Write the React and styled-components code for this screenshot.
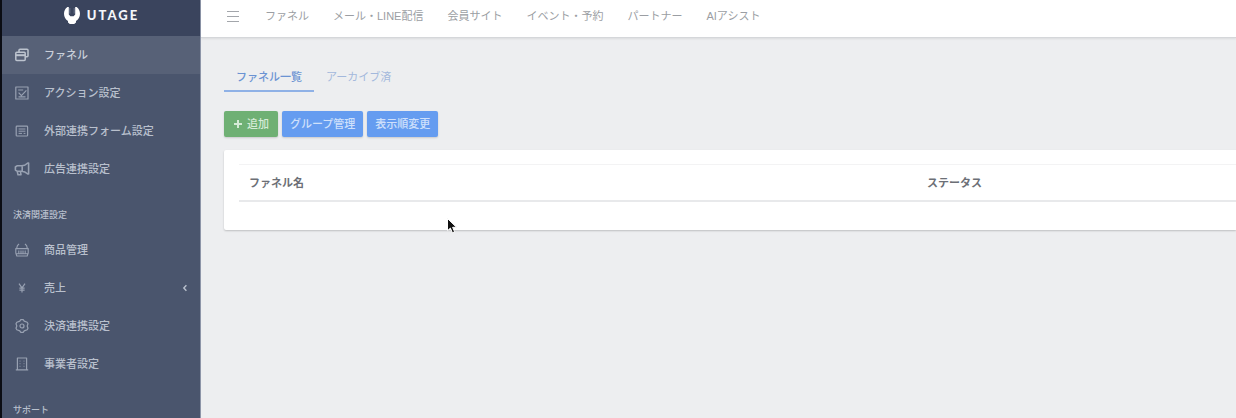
import React from "react";
import styled, { createGlobalStyle } from "styled-components";

const GlobalStyle = createGlobalStyle`
  *, *::before, *::after { box-sizing: border-box; }
  body {
    margin: 0;
    background: #edeef0;
    color: #6c6f76;
    font-family: "Liberation Sans", "Noto Sans CJK JP", sans-serif;
    font-size: 11px;
    line-height: 16px;
  }
  ul { list-style: none; margin: 0; padding: 0; }
  a { color: inherit; text-decoration: none; }
`;

const Layout = styled.div`
  display: flex;
  height: 100vh;
  overflow: hidden;
`;

const Sidebar = styled.aside`
  flex: 0 0 201px;
  border-left: 2px solid #0b0d14;
  border-right: 1px solid #8d95a8;
  background: #4a556d;
  color: #b9c0cd;
  overflow: hidden;
`;

const Brand = styled.a`
  display: flex;
  align-items: center;
  justify-content: center;
  gap: 6px;
  height: 36px;
  padding-bottom: 6px;
  background: #3a445d;
  color: #f4f6fa;
  font-family: Lato, sans-serif;
  font-size: 13px;
  font-weight: 900;
  letter-spacing: 2px;
`;

const SideLink = styled.a`
  display: flex;
  align-items: center;
  gap: 14px;
  height: 38px;
  padding: 0 12px;
  font-weight: 500;
  background: ${(p) => (p.$active ? "#576177" : "transparent")};
  color: ${(p) => (p.$active ? "#c9cfd9" : "inherit")};

  > span { flex: 1; }
  > svg:first-child { flex: none; color: ${(p) => (p.$active ? "#bcc3ce" : "#98a1b2")}; }
`;

const SideHeading = styled.h2`
  margin: 0;
  padding: 21px 11px 9px;
  font-size: 9px;
  line-height: 13px;
  font-weight: 500;
`;

const Main = styled.div`
  flex: 1;
  min-width: 0;
`;

const TopBar = styled.header`
  display: flex;
  align-items: center;
  gap: 26px;
  height: 38px;
  padding: 0 26px 6px;
  background: #fff;
  border-bottom: 1px solid #d5d7da;
  box-shadow: 0 1px 2px rgba(0, 0, 0, 0.08);
  color: #9b9ea3;
`;

const MenuButton = styled.button`
  display: flex;
  padding: 0;
  border: 0;
  background: none;
  color: #a3a6ab;
`;

const TopNav = styled.nav`
  display: flex;
  gap: 24px;
  white-space: nowrap;
`;

const Content = styled.main`
  padding: 25px 0 24px 23px;
`;

const Tabs = styled.nav`
  display: flex;
`;

const Tab = styled.a`
  padding: 6px 12px 5px;
  border-bottom: 2px solid ${(p) => (p.$active ? "#8fb1e6" : "transparent")};
  color: ${(p) => (p.$active ? "#6b93d3" : "#a3b8dc")};
  font-weight: ${(p) => (p.$active ? 500 : 400)};
`;

const Toolbar = styled.div`
  display: flex;
  gap: 4px;
  margin: 19px 0 13px;
`;

const Button = styled.button`
  display: flex;
  align-items: center;
  gap: 4px;
  height: 26px;
  padding: 0 ${(p) => (p.$green ? "9px" : "8px")};
  border: 0;
  border-radius: 2px;
  background: ${(p) => (p.$green ? "#6fb074" : "#659cf0")};
  color: ${(p) => (p.$green ? "#d6ebd7" : "#cfe0fb")};
  box-shadow: 0 1px 2px rgba(0, 0, 0, 0.15);
  font: inherit;
  font-weight: 500;
`;

const Card = styled.section`
  padding: 14px 0 28px 15px;
  background: #fff;
  border-radius: 2px 0 0 2px;
  box-shadow: 0 1px 2px rgba(0, 0, 0, 0.2);
`;

const Table = styled.table`
  width: 100%;
  border-collapse: collapse;
  table-layout: fixed;
`;

const HeadCell = styled.th`
  width: ${(p) => p.$width};
  padding: 10px 10px 9px;
  border-top: 1px solid #f3f3f4;
  border-bottom: 2px solid #e8e9eb;
  text-align: left;
  font-weight: 700;
`;

const Pointer = styled.svg`
  position: absolute;
  left: 446px;
  top: 217px;
  pointer-events: none;
`;

const Icon = ({ children }) => (
  <svg width="16" height="16" viewBox="0 0 16 16" fill="none" stroke="currentColor" strokeWidth="1.2" strokeLinejoin="round" aria-hidden="true">
    {children}
  </svg>
);

const icons = {
  windows: (
    <Icon>
      <path d="M5 5V3.200a1 1 0 0 1 1-1h7a1 1 0 0 1 1 1v5.600a1 1 0 0 1-1 1h-2" strokeWidth="1.5" />
      <rect x="1.800" y="5.200" width="9.400" height="8.200" rx="1" strokeWidth="1.500" />
      <path d="M1.800 8.200h9.400" strokeWidth="2" />
    </Icon>
  ),
  check: (
    <Icon>
      <rect x="1.800" y="2" width="12.200" height="12" />
      <path d="M4.200 5h5M4.600 7.600l2.800 3 5-5.200M4.500 11.800h7" />
    </Icon>
  ),
  form: (
    <Icon>
      <rect x="2.200" y="3.200" width="11.400" height="9.800" rx="0.800" />
      <path d="M4.600 6h6.800M4.600 8.200h6.800M4.600 10.400h3.400M9.600 10.400h1.800" strokeWidth="1" />
    </Icon>
  ),
  horn: (
    <Icon>
      <path d="M3 4.800h4.600c2.400 0 4.600-1.200 6.200-2.800h.8v11h-.8c-1.600-1.600-3.800-2.800-6.200-2.800H3L1.400 9V6zM8.200 4.800v5.400M3.200 10.200l.8 3.600h3l-.6-3.600" strokeWidth="1.600" />
    </Icon>
  ),
  basket: (
    <Icon>
      <path d="M1.400 6.600h13.200M1.800 6.600v4.400l1 3h10.400l1-3V6.600M2.600 6.600l.8-3L5 2M13.400 6.600l-.8-3L11 2M4.800 8.600v3.200M7 8.600v3.200M9 8.600v3.200M11.200 8.600v3.200M2.400 11.800h11.200" strokeWidth="1.100" />
    </Icon>
  ),
  yen: (
    <Icon>
      <path d="M5 3.600l3 4.200 3-4.200M8 7.800v4.800M5.400 8.200h5.200M5.400 10.200h5.200" />
    </Icon>
  ),
  gear: (
    <Icon>
      <path d="M6.800 1.600h2.400l1 1.500 3 1.200.8 1.500-.8 2.200.8 2.200-.8 1.500-3 1.200-1 1.500H6.800l-1-1.500-3-1.200-.8-1.500.8-2.200L2 5.800l.8-1.500 3-1.200z" />
      <circle cx="8" cy="8" r="2" />
    </Icon>
  ),
  building: (
    <Icon>
      <path d="M3.400 13.800V2h9.200v11.800M1.800 13.800h12.400" />
      <path d="M6 4.600v6.400M10 4.600v6.400" strokeWidth="0.800" strokeDasharray="1 1.600" />
    </Icon>
  ),
};

const primaryLinks = [
  ["windows", "ファネル"],
  ["check", "アクション設定"],
  ["form", "外部連携フォーム設定"],
  ["horn", "広告連携設定"],
];

const paymentLinks = [
  ["basket", "商品管理"],
  ["yen", "売上"],
  ["gear", "決済連携設定"],
  ["building", "事業者設定"],
];

const topLinks = ["ファネル", "メール・LINE配信", "会員サイト", "イベント・予約", "パートナー", "AIアシスト"];

const SideMenu = ({ links, active, expandable }) => (
  <ul>
    {links.map(([icon, label]) => (
      <li key={label}>
        <SideLink href="#" $active={label === active}>
          {icons[icon]}
          <span>{label}</span>
          {label === expandable && (
            <svg width="6" height="8" viewBox="0 0 6 8" fill="none" stroke="currentColor" strokeWidth="1.4" aria-hidden="true">
              <path d="M4.400 1.200L1.800 4l2.600 2.800" />
            </svg>
          )}
        </SideLink>
      </li>
    ))}
  </ul>
);

export default function App() {
  return (
    <>
      <GlobalStyle />
      <Layout>
        <Sidebar>
          <Brand href="#">
            <svg width="18" height="20" viewBox="0 0 18 20" fill="#fff" aria-hidden="true">
              <path d="M4.400 2C2.200 3.600 1 6 1 8.800c0 3.200 1.600 5.800 4 7.200v1.600l1.800 1.400h4.400l1.800-1.400V16c2.400-1.400 4-4 4-7.200 0-2.800-1.200-5.200-3.400-6.800h-1.400v7.600l-1.600 1.600H7.400L5.800 9.600V2z" />
              <path d="M6.800 3v5.600M11.200 3v5.600" stroke="#7c869a" strokeWidth="0.800" />
            </svg>
            <span>UTAGE</span>
          </Brand>
          <SideMenu links={primaryLinks} active="ファネル" />
          <SideHeading>決済関連設定</SideHeading>
          <SideMenu links={paymentLinks} expandable="売上" />
          <SideHeading>サポート</SideHeading>
        </Sidebar>
        <Main>
          <TopBar>
            <MenuButton aria-label="メニュー">
              <svg width="12" height="12" viewBox="0 0 12 12" stroke="currentColor" aria-hidden="true">
                <path d="M0 1.500h12M0 6.500h12M0 11.500h12" />
              </svg>
            </MenuButton>
            <TopNav>
              {topLinks.map((label) => (
                <a href="#" key={label}>{label}</a>
              ))}
            </TopNav>
          </TopBar>
          <Content>
            <Tabs>
              <Tab href="#" $active>ファネル一覧</Tab>
              <Tab href="#">アーカイブ済</Tab>
            </Tabs>
            <Toolbar>
              <Button $green>
                <svg width="10" height="10" viewBox="0 0 10 10" stroke="currentColor" strokeWidth="2" aria-hidden="true">
                  <path d="M5 1v8M1 5h8" />
                </svg>
                追加
              </Button>
              <Button>グループ管理</Button>
              <Button>表示順変更</Button>
            </Toolbar>
            <Card>
              <Table>
                <thead>
                  <tr>
                    <HeadCell scope="col" $width="68%">ファネル名</HeadCell>
                    <HeadCell scope="col">ステータス</HeadCell>
                  </tr>
                </thead>
              </Table>
            </Card>
          </Content>
        </Main>
      </Layout>
      <Pointer width="12" height="18" viewBox="0 0 12 18" aria-hidden="true">
        <path d="M1.500 1.500v12.200l2.900-2.600 2 4.700 2.200-1-2-4.500h3.900z" fill="#111" stroke="#fff" strokeWidth="1" />
      </Pointer>
    </>
  );
}
